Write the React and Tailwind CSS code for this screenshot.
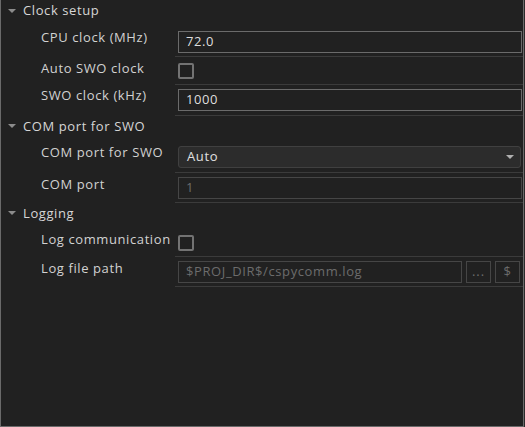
import React from 'react';

const Arrow = () => (
  <svg width="8" height="5" viewBox="0 0 8 5" className="mr-[7px]">
    <path d="M0 0 L8 0 L4 4 Z" fill="#8c8c8c" />
  </svg>
);

const Header = ({ title, h }) => (
  <div className={`flex items-center pl-[7px] text-[#d6d6d6] ${h}`}>
    <Arrow />
    <span>{title}</span>
  </div>
);

const Row = ({ label, rowClass, children }) => (
  <div className={`flex ${rowClass}`}>
    <div className="w-[174px] shrink-0 pl-[40px] text-[#d2d2d2] leading-[20px]">{label}</div>
    <div className="flex-1 border-b border-[#3b3b3b] pl-[3px] pr-[1px]">{children}</div>
  </div>
);

const TextInput = ({ value, disabled }) => (
  <div
    className={`h-[22px] flex items-center px-[7px] border ${
      disabled ? 'border-[#464646] text-[#6c6c6c]' : 'border-[#6b6b6b] text-[#dedede]'
    }`}
  >
    {value}
  </div>
);

const Checkbox = () => (
  <div className="w-[16px] h-[16px] border-2 border-[#737373] rounded-[2px]" />
);

export default function App() {
  return (
    <div
      className="w-[525px] h-[427px] bg-[#2a2a2a] text-[13px] tracking-[0.6px]"
      style={{ fontFamily: '"Open Sans", "Noto Sans", sans-serif' }}
    >
      <div className="w-[524px] h-[427px] bg-[#212121] border-l border-r border-b border-[#6a6a6a]">
        <Header title="Clock setup" h="h-[22px]" />

        <Row label={<div className="pt-[5px]">CPU clock (MHz)</div>} rowClass="h-[35px]">
          <div className="pt-[9px]">
            <TextInput value="72.0" />
          </div>
        </Row>

        <Row label={<div className="pt-[1px]">Auto SWO clock</div>} rowClass="h-[28px]">
          <div className="pt-[6px]">
            <Checkbox />
          </div>
        </Row>

        <Row label={<div className="pt-0">SWO clock (kHz)</div>} rowClass="h-[31px]">
          <div className="pt-[4px]">
            <TextInput value="1000" />
          </div>
        </Row>

        <Header title="COM port for SWO" h="h-[21px]" />

        <Row label={<div className="pt-[5px]">COM port for SWO</div>} rowClass="h-[36px]">
          <div className="pt-[9px] pr-[1px]">
            <div className="h-[22px] flex items-center justify-between pl-[8px] pr-[6px] bg-[#2c2c2c] border border-[#404040] rounded-[3px] text-[#e0e0e0]">
              <span>Auto</span>
              <svg width="8" height="5" viewBox="0 0 8 5">
                <path d="M0 0 L8 0 L4 4 Z" fill="#b0b0b0" />
              </svg>
            </div>
          </div>
        </Row>

        <Row label={<div className="pt-[1px]">COM port</div>} rowClass="h-[30px]">
          <div className="pt-[4px]">
            <TextInput value="1" disabled />
          </div>
        </Row>

        <Header title="Logging" h="h-[21px]" />

        <Row label={<div className="pt-[5px]">Log communication</div>} rowClass="h-[33px]">
          <div className="pt-[11px]">
            <Checkbox />
          </div>
        </Row>

        <Row label={<div className="pt-[1px]">Log file path</div>} rowClass="h-[30px]">
          <div className="pt-[4px] flex gap-[3px] pr-[2px]">
            <div className="flex-1">
              <TextInput value="$PROJ_DIR$/cspycomm.log" disabled />
            </div>
            <div className="w-[25px] h-[22px] border border-[#464646] flex items-center justify-center text-[#6c6c6c] ml-[1px] tracking-[1px]">...</div>
            <div className="w-[25px] h-[22px] border border-[#464646] flex items-center justify-center text-[#6c6c6c] ml-[1px]">$</div>
          </div>
        </Row>
      </div>
    </div>
  );
}
